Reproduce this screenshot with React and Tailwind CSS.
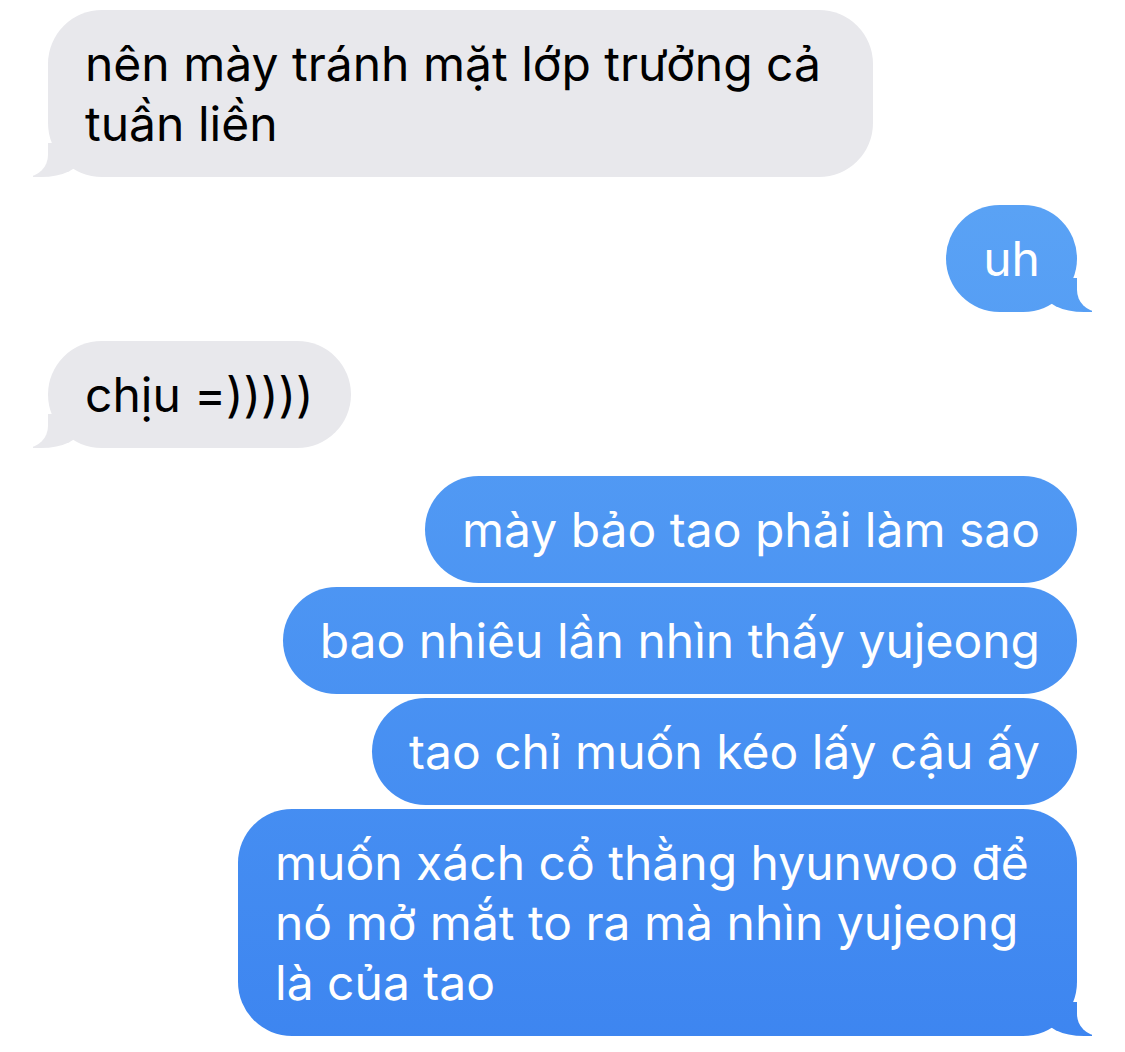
import React from "react";

const bubble =
  "relative whitespace-nowrap px-[37px] py-[23.5px] text-[48px] leading-[60px] rounded-[54px]";

const them =
  bubble +
  " self-start bg-[#e8e8ec] text-black before:absolute before:bottom-0 before:left-[-15px] before:w-[48px] before:h-[34px] before:rounded-br-[40px_20px] before:bg-[#e8e8ec] after:absolute after:bottom-0 after:left-[-40px] after:w-[40px] after:h-[34px] after:bg-white after:rounded-br-[22px]";

const me =
  bubble +
  " self-end text-white bg-fixed bg-linear-to-b from-[#61a9f6] to-[#3d85f0]";

const tailMe =
  " before:absolute before:bottom-0 before:right-[-15px] before:w-[48px] before:h-[34px] before:rounded-bl-[40px_20px] before:bg-fixed before:bg-linear-to-b before:from-[#61a9f6] before:to-[#3d85f0] after:absolute after:bottom-0 after:right-[-40px] after:w-[40px] after:h-[34px] after:bg-white after:rounded-bl-[22px]";

export default function App() {
  return (
    <div className="min-h-screen bg-white px-12 pt-[10px] pb-4 flex flex-col font-[Inter,sans-serif] antialiased">
      <div className={them + " w-[825px]"}>
        nên mày tránh mặt lớp trưởng cả
        <br />
        tuần liền
      </div>

      <div className={me + tailMe + " mt-[28px]"}>uh</div>

      <div className={them + " mt-[29px]"}>chịu =)))))</div>

      <div className={me + " mt-[28px]"}>mày bảo tao phải làm sao</div>
      <div className={me + " mt-1"}>bao nhiêu lần nhìn thấy yujeong</div>
      <div className={me + " mt-1"}>tao chỉ muốn kéo lấy cậu ấy</div>
      <div className={me + tailMe + " mt-1 w-[839px]"}>
        muốn xách cổ thằng hyunwoo để
        <br />
        nó mở mắt to ra mà nhìn yujeong
        <br />
        là của tao
      </div>
    </div>
  );
}
